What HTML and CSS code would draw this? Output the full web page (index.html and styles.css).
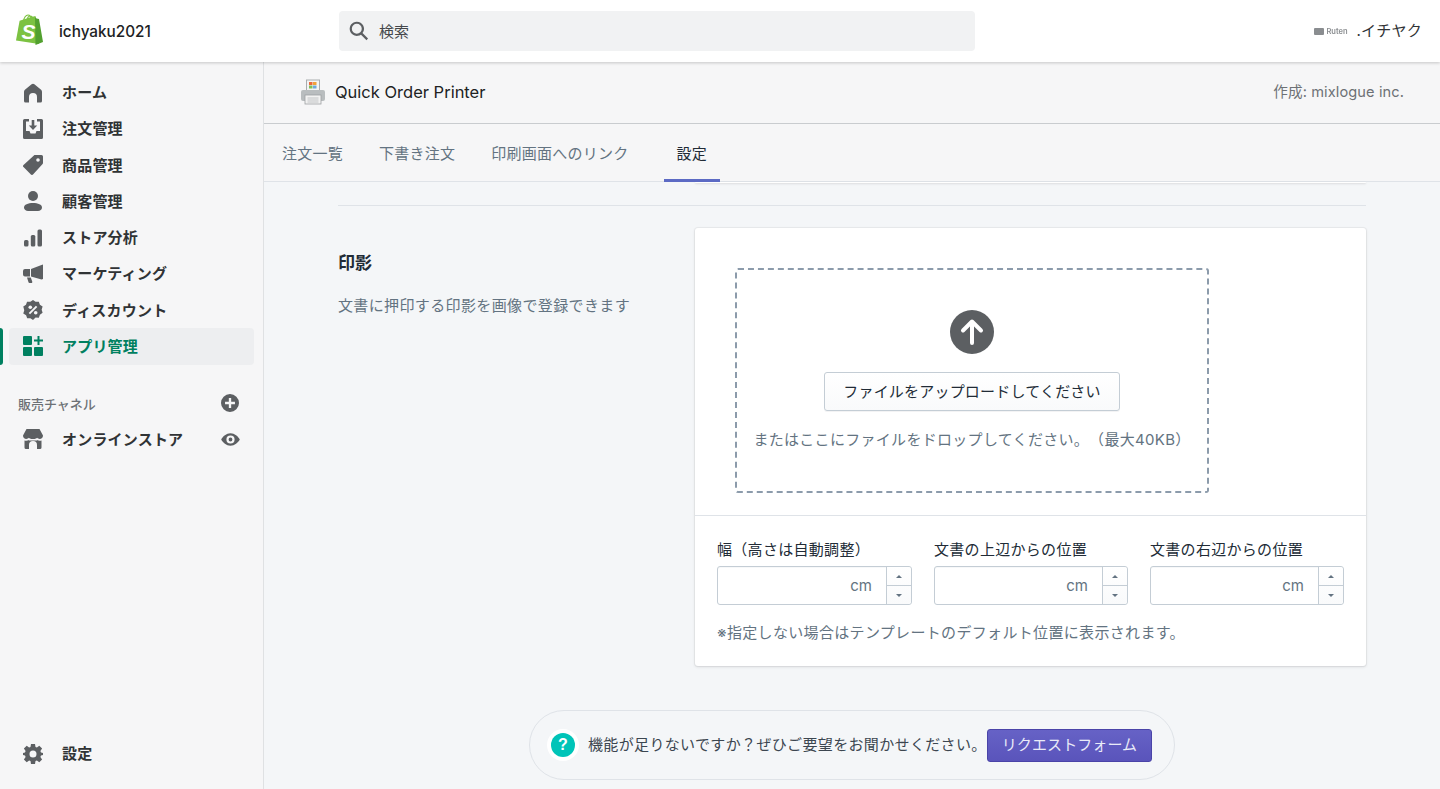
FILE: index.html
```html
<!DOCTYPE html>
<html lang="ja">
<head>
  <meta charset="UTF-8">
  <meta name="viewport" content="width=device-width, initial-scale=1.0">
  <title>Quick Order Printer</title>
  <link rel="stylesheet" href="styles.css">
</head>
<body>
  <!-- Top bar -->
  <header class="topbar">
    <div class="brand">
      <svg class="brand-logo" viewBox="0 0 28 32" width="28" height="32">
        <path d="M1 26.500 4.600 6.800 15.500 3.200 20.500 2 24 30 1 26.500Z" fill="#7cc242"/>
        <path d="M20 3 21.600 4.600 24 4.900 28 28 20.500 31Z" fill="#52a02f"/>
        <path d="M8.500 7.500C8.800 3.500 11 1 13 1s3 2.200 3 4.500M12 6.200C12.300 3.500 13.800 2 15.400 2s2.300 1.600 2.400 3.400" fill="none" stroke="#7cc242" stroke-width="1.200"/>
        <text class="brand-s" x="6.500" y="25">S</text>
      </svg>
      <span class="brand-name">ichyaku2021</span>
    </div>
    <div class="search">
      <svg viewBox="0 0 20 20" width="22" height="22"><path d="M8 1.500a6.500 6.500 0 0 1 5.200 10.400l5 5-1.400 1.400-5-5A6.500 6.500 0 1 1 8 1.500Zm0 2a4.500 4.500 0 1 0 0 9 4.500 4.500 0 0 0 0-9Z" fill="#5c5f62"/></svg>
      <span>検索</span>
    </div>
    <div class="account">
      <span class="ruten"><i></i>Ruten</span>
      <span class="account-name">.イチヤク</span>
    </div>
  </header>

  <div class="layout">
    <!-- Sidebar -->
    <nav class="sidebar">
      <a class="nav-item">
        <svg viewBox="0 0 20 20"><path d="M10 .8c.5 0 1 .2 1.400.5l6.400 5.200c.7.6 1.200 1.500 1.200 2.400V18a1.500 1.500 0 0 1-1.500 1.500H14V14a4 4 0 0 0-8 0v5.500H2.500A1.500 1.500 0 0 1 1 18V8.900c0-.9.500-1.800 1.200-2.400l6.400-5.200c.4-.3.900-.5 1.400-.5Z"/></svg>
        <span>ホーム</span>
      </a>
      <a class="nav-item">
        <svg viewBox="0 0 20 20"><path fill-rule="evenodd" d="M1.500 0h4.500v2.500H3v9.500h3.500l1 2.500h5l1-2.500H17V2.500h-3V0h4.500A1.500 1.500 0 0 1 20 1.500v17a1.500 1.500 0 0 1-1.500 1.500h-17A1.500 1.500 0 0 1 0 18.500v-17A1.500 1.500 0 0 1 1.500 0Z"/><path d="M8.700 1h2.600v5.500h2.900L10 11 5.800 6.500h2.900Z"/></svg>
        <span>注文管理</span>
      </a>
      <a class="nav-item">
        <svg viewBox="0 0 20 20"><path fill-rule="evenodd" d="M12 0h6.500A1.500 1.500 0 0 1 20 1.500V8c0 .4-.2.800-.4 1.100L10 19.500a1.500 1.500 0 0 1-2.100 0L.5 12.100a1.500 1.500 0 0 1 0-2.100L10.900.4c.3-.3.700-.4 1.100-.4Zm3 3.200a1.800 1.800 0 1 0 0 3.600 1.800 1.800 0 0 0 0-3.600Z"/></svg>
        <span>商品管理</span>
      </a>
      <a class="nav-item">
        <svg viewBox="0 0 20 20"><circle cx="10" cy="5" r="5"/><path d="M1 16.500C1 13.500 5 12 10 12s9 1.500 9 4.500c0 2-2 3.500-4 3.500H5c-2 0-4-1.500-4-3.500Z"/></svg>
        <span>顧客管理</span>
      </a>
      <a class="nav-item">
        <svg viewBox="0 0 20 20"><rect x="1" y="12" width="4.500" height="6.500" rx="1.500"/><rect x="7.800" y="7" width="4.500" height="11.500" rx="1.500"/><rect x="14.500" y="1.500" width="4.500" height="17" rx="1.500"/></svg>
        <span>ストア分析</span>
      </a>
      <a class="nav-item">
        <svg viewBox="0 0 20 20"><path d="M20 .5v14.500l-1.500.5L8 12.500V5L18.500 1ZM0 7a2 2 0 0 1 2-2h5v7.500H2a2 2 0 0 1-2-2ZM4 13.500h3.800l1.500 4.200c.2.500-.2 1.300-1 1.300H6.500c-.5 0-.9-.3-1-.8Z"/></svg>
        <span>マーケティング</span>
      </a>
      <a class="nav-item">
        <svg viewBox="0 0 20 20"><path fill-rule="evenodd" transform="translate(-.8 0) scale(1.080)" d="M10 0l2.400 1.700 3-.1 1 2.800 2.500 1.700-.9 2.900.9 2.900-2.500 1.700-1 2.800-3-.1L10 18.500l-2.400-1.700-3 .1-1-2.800L1 12.400l.9-2.900L1 6.100l2.500-1.700 1-2.800 3 .1Z"/><g fill="#f6f6f7"><circle cx="7.300" cy="7.300" r="1.800"/><circle cx="12.700" cy="12.700" r="1.800"/><path d="M12.900 5.700l1.400 1.400-7.200 7.200-1.400-1.400Z"/></g></svg>
        <span>ディスカウント</span>
      </a>
      <a class="nav-item active">
        <svg viewBox="0 0 20 20"><rect x="0" y="0" width="9" height="9" rx="1"/><rect x="0" y="11" width="9" height="9" rx="1"/><rect x="11" y="11" width="9" height="9" rx="1"/><path d="M14.500 0h2v3.500H20v2h-3.500V9h-2V5.500H11v-2h3.500Z"/></svg>
        <span>アプリ管理</span>
      </a>

      <div class="nav-heading">
        <span>販売チャネル</span>
        <svg viewBox="0 0 20 20" width="18" height="18"><path fill-rule="evenodd" d="M10 0a10 10 0 1 1 0 20 10 10 0 0 1 0-20Zm-1.300 4.500v4.200H4.500v2.600h4.200v4.200h2.600v-4.200h4.200V8.700h-4.200V4.500Z" fill="#5c5f62"/></svg>
      </div>
      <a class="nav-item store">
        <svg viewBox="0 0 20 20"><path d="M3.500 0h13L20 6.500C20 8.500 18.500 10 16.700 10c-1 0-2-.5-2.600-1.200-.6.700-1.600 1.200-2.500 1.200H8.400c-1 0-1.900-.5-2.500-1.200C5.300 9.500 4.300 10 3.300 10 1.500 10 0 8.500 0 6.500Z"/><path d="M1.500 11.500c.6.200 1.200.3 1.800.3.900 0 1.800-.2 2.500-.7v.4H14.200v-.4c.7.500 1.600.7 2.500.7.600 0 1.200-.1 1.800-.3v7A1.500 1.500 0 0 1 17 20h-3v-4a4 4 0 0 0-8 0v4H3a1.500 1.500 0 0 1-1.500-1.500Z"/></svg>
        <span>オンラインストア</span>
        <svg class="eye" viewBox="0 0 20 20"><path fill-rule="evenodd" d="M10 3.500c4.400 0 8 3.200 9.800 6.500-1.800 3.300-5.400 6.500-9.800 6.500S2 13.300.2 10C2 6.700 5.600 3.500 10 3.500Zm0 2.200a4.300 4.300 0 1 0 0 8.600 4.300 4.300 0 0 0 0-8.600Zm0 2.300a2 2 0 1 1 0 4 2 2 0 0 1 0-4Z"/></svg>
      </a>

      <a class="nav-item settings">
        <svg viewBox="0 0 20 20"><path fill-rule="evenodd" d="M8 0h4l.5 2.900 1.400.6 2.400-1.700 2.800 2.800-1.700 2.400.6 1.500L20 9v2l-2 .5-.6 1.500 1.700 2.400-2.800 2.800-2.400-1.700-1.400.6L12 20H8l-.5-2.900-1.400-.6-2.400 1.700-2.800-2.800L2.600 13 2 11.500 0 11V9l2-.5.6-1.500L.9 4.600l2.800-2.800 2.400 1.700 1.400-.6ZM10 6.500a3.500 3.500 0 1 0 0 7 3.500 3.500 0 0 0 0-7Z"/></svg>
        <span>設定</span>
      </a>
    </nav>

    <main class="main">
      <!-- App title -->
      <div class="app-bar">
        <div class="app-title">
          <svg viewBox="0 0 26 26" width="26" height="26">
            <rect x="6.500" y="1" width="13" height="13" fill="#f4f4f4" stroke="#a9adaf"/>
            <rect x="9" y="3" width="3.500" height="3" fill="#e8673c"/><rect x="13" y="3" width="3.500" height="3" fill="#f0a23a"/>
            <rect x="9" y="6.500" width="3.500" height="3" fill="#7fbf5a"/><rect x="13" y="6.500" width="3.500" height="3" fill="#6fa8dc"/>
            <path d="M3 11h20a2 2 0 0 1 2 2v7a2 2 0 0 1-2 2H3a2 2 0 0 1-2-2v-7a2 2 0 0 1 2-2Z" fill="#b9bdbf"/>
            <rect x="5" y="16" width="16" height="9" fill="#f2f2f2" stroke="#9da1a3" stroke-width=".8"/>
            <path d="M7.500 19h11M7.500 21h11M7.500 23h11" stroke="#b5b8ba" stroke-width=".8"/>
          </svg>
          <span>Quick Order Printer</span>
        </div>
        <span class="app-author">作成: mixlogue inc.</span>
      </div>

      <!-- Tabs -->
      <div class="tabs">
        <a class="tab">注文一覧</a>
        <a class="tab">下書き注文</a>
        <a class="tab">印刷画面へのリンク</a>
        <a class="tab current">設定</a>
      </div>

      <div class="content">
        <div class="card-end"></div>
        <hr class="divider">

        <section class="stamp">
          <div class="stamp-intro">
            <h2>印影</h2>
            <p>文書に押印する印影を画像で登録できます</p>
          </div>

          <div class="card">
            <div class="card-upload">
              <div class="dropzone">
                <svg viewBox="0 0 44 44" width="44" height="44">
                  <circle cx="22" cy="22" r="22" fill="#5c5f62"/>
                  <path d="M22 33V12M13 20.500l9-9 9 9" fill="none" stroke="#fff" stroke-width="4" stroke-linecap="round" stroke-linejoin="round"/>
                </svg>
                <button class="upload-btn">ファイルをアップロードしてください</button>
                <p>またはここにファイルをドロップしてください。（最大40KB）</p>
              </div>
            </div>
            <div class="card-fields">
              <div class="fields">
                <div class="field">
                  <label>幅（高さは自動調整）</label>
                  <div class="number"><span class="unit">cm</span><span class="spin"><i class="up"></i><i class="down"></i></span></div>
                </div>
                <div class="field">
                  <label>文書の上辺からの位置</label>
                  <div class="number"><span class="unit">cm</span><span class="spin"><i class="up"></i><i class="down"></i></span></div>
                </div>
                <div class="field">
                  <label>文書の右辺からの位置</label>
                  <div class="number"><span class="unit">cm</span><span class="spin"><i class="up"></i><i class="down"></i></span></div>
                </div>
              </div>
              <p class="note">※指定しない場合はテンプレートのデフォルト位置に表示されます。</p>
            </div>
          </div>
        </section>

        <div class="request">
          <span class="help"><b>?</b></span>
          <span class="request-text">機能が足りないですか？ぜひご要望をお聞かせください。</span>
          <button class="request-btn">リクエストフォーム</button>
        </div>
      </div>
    </main>
  </div>
</body>
</html>
```

FILE: styles.css
```css
/* Reset and Global Styles */
* {
  margin: 0;
  padding: 0;
  box-sizing: border-box;
}

body {
  font-family: Inter, "Noto Sans CJK JP", sans-serif;
  background: #f6f6f7;
  color: #202223;
  height: 789px;
  overflow: hidden;
  font-size: 15px;
  text-spacing-trim: space-all;
}

/* Top bar */
.topbar {
  height: 62px;
  background: white;
  box-shadow: 0 1px 3px rgba(0, 0, 0, 0.2);
  display: flex;
  align-items: center;
  position: relative;
  z-index: 2;
}

.brand {
  width: 339px;
  padding-left: 15px;
  display: flex;
  align-items: center;
}

.brand-logo {
  margin-top: -2px;
}

.brand-s {
  font-family: "Liberation Sans", sans-serif;
  font-size: 21px;
  font-weight: bold;
  font-style: italic;
  fill: white;
}

.brand-name {
  margin-left: 16px;
  font-size: 15.300px;
  font-weight: 500;
}

.search {
  width: 636px;
  height: 40px;
  background: #f1f2f3;
  border-radius: 4px;
  display: flex;
  align-items: center;
  padding-left: 9px;
  gap: 9px;
  font-size: 15px;
  color: #44474a;
}

.search span {
  margin-top: -2px;
}

.account {
  margin-left: auto;
  padding-right: 18px;
  display: flex;
  align-items: center;
  gap: 10px;
}

.ruten {
  width: 32px;
  display: flex;
  align-items: center;
  gap: 2px;
  font-size: 7.500px;
  font-weight: 600;
  color: #8a8d90;
  filter: blur(0.3px);
}

.ruten i {
  width: 10px;
  height: 7px;
  background: #8a8d90;
  border-radius: 1px;
  flex-shrink: 0;
}

.account-name {
  font-size: 15px;
  letter-spacing: 0.25px;
  color: #303335;
  margin-top: -3px;
}

/* Page frame */
.layout {
  display: flex;
  height: 727px;
}

.sidebar {
  width: 264px;
  flex-shrink: 0;
  background: #f6f6f7;
  border-right: 1px solid #dfe1e3;
  padding-top: 12.500px;
  display: flex;
  flex-direction: column;
}

.nav-item {
  height: 36.250px;
  margin: 0 9px;
  padding-left: 14px;
  display: flex;
  align-items: center;
  gap: 19px;
  border-radius: 4px;
  font-size: 15px;
  letter-spacing: 0.2px;
  font-weight: 600;
  color: #303335;
  position: relative;
}

.nav-item span {
  margin-top: -2px;
}

.nav-item svg {
  width: 20px;
  height: 20px;
  fill: #5c5f62;
  flex-shrink: 0;
}

.nav-item.active {
  background: #edeef0;
  color: #008060;
}

.nav-item.active svg {
  fill: #008060;
}

.nav-item.active::before {
  content: "";
  position: absolute;
  left: -9px;
  top: 0;
  bottom: 0;
  width: 3px;
  background: #008060;
  border-radius: 0 3px 3px 0;
}

.nav-heading {
  margin: 21px 24px 0 18px;
  height: 35.500px;
  display: flex;
  align-items: center;
  justify-content: space-between;
  font-size: 13px;
  font-weight: 500;
  color: #6d7175;
}

.nav-item .eye {
  width: 19px;
  height: 19px;
  margin-left: auto;
  margin-right: 14px;
}

.settings {
  margin-top: auto;
  margin-bottom: 17px;
}

/* Main column */
.main {
  flex: 1;
  min-width: 0;
  background: #f4f6f8;
}

.app-bar {
  height: 62px;
  background: #f6f6f7;
  border-bottom: 1px solid #c9cccf;
  display: flex;
  align-items: center;
  justify-content: space-between;
  padding: 0 36px 2px 36px;
}

.app-title {
  display: flex;
  align-items: center;
  gap: 9px;
  font-size: 16.500px;
  color: #202223;
}

.app-author {
  font-size: 14.600px;
  letter-spacing: 0.1px;
  color: #6d7175;
  margin-top: -2px;
}

.tabs {
  height: 58px;
  background: #f6f6f7;
  border-bottom: 1px solid #dfe3e8;
  display: flex;
  padding-left: 18px;
}

.tab {
  font-size: 15px;
  letter-spacing: 0.25px;
  color: #637381;
  display: flex;
  align-items: center;
  margin-right: 36px;
}

.tab.current {
  color: #212b36;
  position: relative;
  margin-left: 12px;
}

.tab.current::after {
  content: "";
  position: absolute;
  left: -13px;
  right: -13px;
  bottom: -1px;
  height: 3px;
  background: #5c6ac4;
}

/* Settings section */
.content {
  padding: 0 74px;
}

.card-end {
  height: 1px;
  margin-left: 357px;
  background: white;
  border-radius: 0 0 3px 3px;
  box-shadow: 0 1px 2px rgba(63, 63, 68, 0.2);
}

.divider {
  border: none;
  border-top: 1px solid #dfe3e8;
  margin-top: 22px;
}

.stamp {
  display: flex;
  margin-top: 22px;
}

.stamp-intro {
  width: 357px;
  padding-top: 24px;
}

.stamp-intro h2 {
  font-size: 17px;
  font-weight: 600;
  color: #212b36;
  line-height: 22px;
}

.stamp-intro p {
  margin-top: 21px;
  font-size: 15px;
  letter-spacing: 0.37px;
  line-height: 22px;
  color: #637381;
}

.card {
  width: 671px;
  height: 438px;
  background: white;
  border-radius: 3px;
  box-shadow: 0 0 0 1px rgba(63, 63, 68, 0.05), 0 1px 3px rgba(63, 63, 68, 0.15);
}

.card-upload {
  padding: 40px 40px 22px;
  border-bottom: 1px solid #dfe3e8;
}

.dropzone {
  width: 474px;
  height: 225px;
  border: 2px dashed #8c9bab;
  border-radius: 3px;
  display: flex;
  flex-direction: column;
  align-items: center;
  padding-top: 40px;
}

.upload-btn {
  margin-top: 18px;
  width: 296px;
  height: 39px;
  padding-bottom: 2px;
  font: inherit;
  font-size: 15px;
  letter-spacing: 0.2px;
  color: #212b36;
  background: linear-gradient(to bottom, white, #f9fafb);
  border: 1px solid #c4cdd5;
  border-radius: 3px;
  box-shadow: 0 1px 0 rgba(22, 29, 37, 0.05);
}

.dropzone p {
  margin-top: 19px;
  font-size: 15px;
  letter-spacing: 0.3px;
  line-height: 20px;
  color: #637381;
}

.card-fields {
  padding: 24px 22px 0;
}

.fields {
  display: grid;
  grid-template-columns: 195px 194px 194px;
  gap: 22px;
}

.field label {
  display: block;
  font-size: 15px;
  letter-spacing: 0.3px;
  line-height: 20px;
  color: #212b36;
  margin-bottom: 6px;
}

.number {
  height: 39px;
  border: 1px solid #c4cdd5;
  border-radius: 3px;
  display: flex;
  align-items: center;
  justify-content: flex-end;
  box-shadow: inset 0 1px 0 rgba(99, 115, 129, 0.05);
}

.unit {
  font-size: 15px;
  color: #637381;
  margin-right: 14px;
}

.spin {
  width: 25px;
  height: 37px;
  background: linear-gradient(to bottom, white, #f9fafb);
  border-left: 1px solid #c4cdd5;
  border-radius: 0 3px 3px 0;
  display: flex;
  flex-direction: column;
}

.spin i {
  flex: 1;
  display: flex;
  align-items: center;
  justify-content: center;
}

.spin i.up {
  border-bottom: 1px solid #c4cdd5;
}

.spin i::after {
  content: "";
  border-left: 3.500px solid transparent;
  border-right: 3.500px solid transparent;
}

.spin i.up::after {
  border-bottom: 3.500px solid #637381;
}

.spin i.down::after {
  border-top: 3.500px solid #637381;
}

.note {
  margin-top: 18px;
  font-size: 15px;
  letter-spacing: 0.33px;
  line-height: 20px;
  color: #637381;
}

/* Request pill */
.request {
  width: 646px;
  height: 70px;
  margin: 44px 0 0 191px;
  border: 1px solid #dfe3e8;
  border-radius: 35px;
  display: flex;
  align-items: center;
  padding-left: 21px;
}

.help {
  width: 24px;
  height: 24px;
  border-radius: 50%;
  background: #00c4b8;
  box-shadow: 0 0 0 4px white;
  color: white;
  display: flex;
  align-items: center;
  justify-content: center;
  font-size: 16px;
  font-family: "Liberation Sans", sans-serif;
}

.request-text {
  margin-left: 13px;
  font-size: 15px;
  letter-spacing: 0.35px;
  color: #3c4650;
  white-space: nowrap;
  width: 399px;
  margin-top: -3px;
}

.request-btn {
  width: 165px;
  height: 33px;
  padding-bottom: 3px;
  font: inherit;
  font-size: 15px;
  letter-spacing: 0.1px;
  color: #e9ebf8;
  background: linear-gradient(to bottom, #6662c6, #5a54bb);
  border: 1px solid #4a44a8;
  border-radius: 3px;
}
```
